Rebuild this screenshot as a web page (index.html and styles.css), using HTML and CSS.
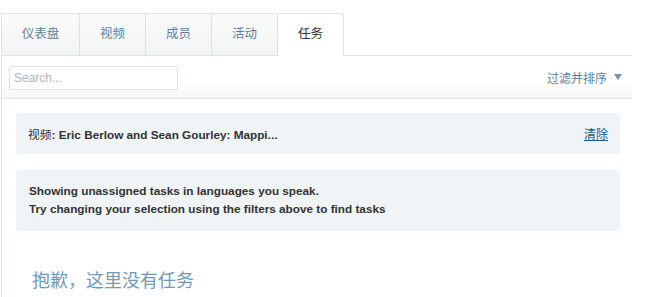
FILE: index.html
```html
<!DOCTYPE html>
<html lang="zh-CN">
<head>
    <meta charset="UTF-8">
    <title>任务</title>
    <link rel="stylesheet" href="styles.css">
</head>
<body>
    <div class="team-page">
        <ul class="tabs">
            <li class="tab tab-first"><a href="#">仪表盘</a></li>
            <li class="tab"><a href="#">视频</a></li>
            <li class="tab"><a href="#">成员</a></li>
            <li class="tab"><a href="#">活动</a></li>
            <li class="tab active"><a href="#">任务</a></li>
        </ul>

        <div class="tools">
            <input type="text" class="search" placeholder="Search...">
            <a href="#" class="filter-toggle">过滤并排序 <span class="caret"></span></a>
        </div>

        <div class="content">
            <div class="notice notice-filter">
                <span><span class="cjk">视频</span>: Eric Berlow and Sean Gourley: Mappi...</span>
                <a href="#" class="clear">清除</a>
            </div>
            <div class="notice notice-info">
                <p>Showing unassigned tasks in languages you speak.</p>
                <p>Try changing your selection using the filters above to find tasks</p>
            </div>
            <h3 class="empty">抱歉，这里没有任务</h3>
        </div>
    </div>
</body>
</html>
```

FILE: styles.css
```css
body {
    margin: 0;
    font-family: "Liberation Sans", Arial, "Noto Sans CJK SC", sans-serif;
    background-color: #fff;
    color: #333;
}
.team-page {
    width: 631px;
    margin: 13px 0 0 1px;
}
.tabs {
    list-style: none;
    margin: 0;
    padding: 0;
    display: flex;
    height: 42px;
    border-bottom: 1px solid #dde2e6;
}
.tab {
    width: 66px;
    border: 1px solid #dde2e6;
    border-left: none;
    border-bottom: none;
    background: linear-gradient(#fafafa, #f3f4f5);
    box-sizing: border-box;
}
.tab-first {
    width: 79px;
    border-left: 1px solid #dde2e6;
}
.tab a {
    display: block;
    line-height: 41px;
    text-align: center;
    font-size: 12.5px;
    color: #5f8196;
    text-decoration: none;
}
.tab.active {
    background: #fff;
    height: 43px;
    border-radius: 3px 3px 0 0;
}
.tab.active a {
    color: #333;
}
.tools {
    display: flex;
    align-items: center;
    justify-content: space-between;
    height: 42px;
    padding: 0 8px 0 7px;
    border-left: 1px solid #dde2e6;
    border-bottom: 1px solid #e2e2e2;
    background: linear-gradient(#fff, #fff 60%, #f6f6f6);
}
.search {
    width: 169px;
    height: 24px;
    box-sizing: border-box;
    border: 1px solid #dde2e6;
    border-radius: 2px;
    padding: 0 4px;
    font-family: inherit;
    font-size: 12px;
    margin-top: 1px;
}
.search::placeholder {
    color: #b0b4b8;
}
.filter-toggle {
    font-size: 12px;
    color: #5b7d96;
    text-decoration: none;
    display: flex;
    align-items: center;
    margin-right: 2px;
}
.caret {
    display: inline-block;
    margin-left: 7px;
    border-left: 4px solid transparent;
    border-right: 4px solid transparent;
    border-top: 6px solid #7a93a6;
}
.content {
    border-left: 1px solid #dde2e6;
    padding: 14px 12px 12px 14px;
}
.notice {
    background-color: #f0f4f7;
    border-radius: 3px;
    font-size: 11.75px;
    font-weight: bold;
    color: #333;
    width: 604px;
    box-sizing: border-box;
}
.cjk {
    font-weight: normal;
}
.notice-filter {
    display: flex;
    justify-content: space-between;
    align-items: center;
    height: 41px;
    padding: 0 12px 0 12px;
}
.clear {
    color: #1b5b87;
    font-weight: normal;
    font-size: 12px;
    text-decoration: underline;
}
.notice-info {
    margin-top: 16px;
    padding: 12px 13px 13px;
}
.notice-info p {
    margin: 0;
    line-height: 18px;
}
.empty {
    margin: 35px 0 0 16px;
    font-size: 18px;
    font-weight: normal;
    color: #7199b6;
}
```
